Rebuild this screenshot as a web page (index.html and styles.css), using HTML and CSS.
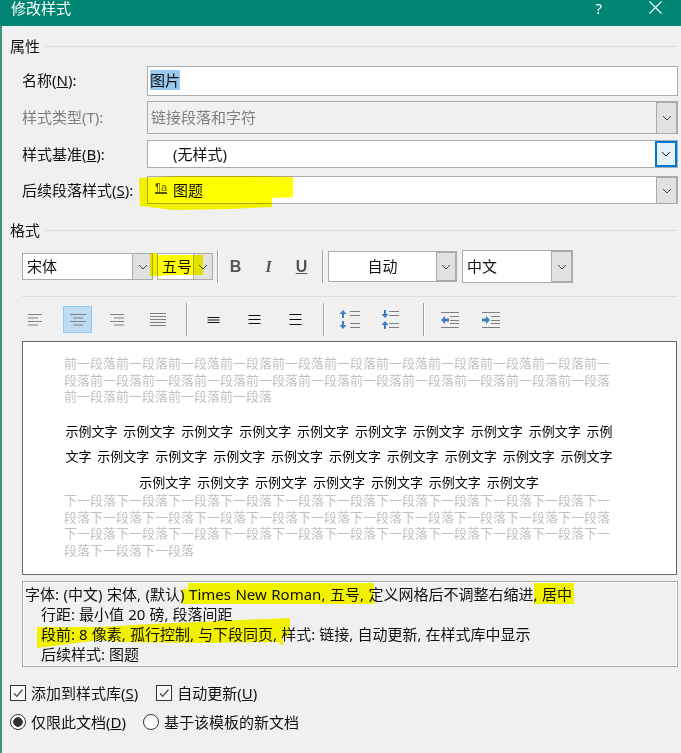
FILE: index.html
```html
<!DOCTYPE html>
<html lang="zh-CN">
<head>
	<meta charset="UTF-8">
	<title>修改样式</title>
	<link rel="stylesheet" href="styles.css">
</head>
<body>
	<svg class="defs" width="0" height="0">
		<symbol id="chev" viewBox="0 0 10 6"><path d="M1 1l4 4 4-4" fill="none" stroke="currentColor" stroke-width="1"/></symbol>
	</svg>
	<div class="dialog">
		<div class="title">
			<span class="title-text">修改样式</span>
			<span class="help">?</span>
			<svg class="close" width="13" height="13" viewBox="0 0 13 13"><path d="M.5.5l12 12M12.5.5l-12 12" stroke="#fff" stroke-width="1.1" fill="none"/></svg>
		</div>

		<div class="legend legend-props"><span>属性</span><i></i></div>

		<div class="row row-name">
			<label>名称(<u>N</u>):</label>
			<div class="field"><span class="val val-sel"><b>图片</b></span></div>
		</div>
		<div class="row row-type">
			<label class="off">样式类型(T):</label>
			<div class="field field-off"><span class="val">链接段落和字符</span><span class="drop drop-off"><svg width="10" height="6"><use href="#chev"/></svg></span></div>
		</div>
		<div class="row row-base">
			<label>样式基准(<u>B</u>):</label>
			<div class="field"><span class="val val-in">(无样式)</span><span class="drop drop-on"><svg width="10" height="6"><use href="#chev"/></svg></span></div>
		</div>
		<div class="row row-next">
			<label>后续段落样式(<u>S</u>):</label>
			<div class="field"><span class="val val-icon"><em class="para">¶a</em>图题</span><span class="drop"><svg width="10" height="6"><use href="#chev"/></svg></span></div>
		</div>

		<div class="legend legend-format"><span>格式</span><i></i></div>

		<div class="bar bar-font">
			<div class="sel sel-font"><span>宋体</span><span class="drop"><svg width="10" height="6"><use href="#chev"/></svg></span></div>
			<div class="sel sel-size"><span>五号</span><span class="drop"><svg width="10" height="6"><use href="#chev"/></svg></span></div>
			<i class="sep"></i>
			<span class="fmt fmt-b">B</span>
			<span class="fmt fmt-i">I</span>
			<span class="fmt fmt-u">U</span>
			<i class="sep"></i>
			<div class="sel sel-color"><span>自动</span><span class="drop drop-thick"><svg width="10" height="6"><use href="#chev"/></svg></span></div>
			<div class="sel sel-lang"><span>中文</span><span class="drop drop-thick"><svg width="10" height="6"><use href="#chev"/></svg></span></div>
		</div>

		<div class="divider"></div>

		<div class="bar bar-para">
			<span class="tool"><svg width="16" height="14" viewBox="0 0 16 14"><path d="M1 1.5h14M1 5h10M1 8.5h14M1 12h10" stroke="#808080"/></svg></span>
			<span class="tool tool-on"><svg width="16" height="14" viewBox="0 0 16 14"><path d="M0 1.5h16M3 5h10M0 8.5h16M3 12h10" stroke="#808080"/></svg></span>
			<span class="tool"><svg width="16" height="14" viewBox="0 0 16 14"><path d="M1 1.5h14M5 5h10M1 8.5h14M5 12h10" stroke="#808080"/></svg></span>
			<span class="tool"><svg width="16" height="14" viewBox="0 0 16 14"><path d="M0 .5h16M0 3.5h16M0 6.5h16M0 9.5h16M0 12.5h16" stroke="#808080"/></svg></span>
			<i class="sep sep-a"></i>
			<span class="tool"><svg width="13" height="14" viewBox="0 0 13 14"><path d="M.5 4.5h12M.5 7h12M.5 9.5h12" stroke="#111" fill="none"/></svg></span>
			<span class="tool"><svg width="13" height="14" viewBox="0 0 13 14"><path d="M.5 2.5h12M.5 6.5h12M.5 10.5h12" stroke="#111" fill="none"/></svg></span>
			<span class="tool"><svg width="13" height="14" viewBox="0 0 13 14"><path d="M.5 1.5h12M.5 6.5h12M.5 11.5h12" stroke="#111" fill="none"/></svg></span>
			<i class="sep sep-b"></i>
			<span class="tool"><svg width="22" height="19" viewBox="0 0 22 19"><path d="M4 0L.5 4H3v4h2V4h2.5zM3 11v4H.5L4 19l3.500-4H5v-4z" fill="#3f7fc0"/><path d="M11 1.500h10M11 5.500h10M11 13.500h10M11 17.500h10" stroke="#808080"/></svg></span>
			<span class="tool"><svg width="19" height="19" viewBox="0 0 19 19"><path d="M3 0v4H.5L4 8l3.500-4H5V0zM4 11L.5 15H3v4h2v-4h2.500z" fill="#3f7fc0"/><path d="M8 1.500h10M8 5.500h10M8 13.500h10M8 17.500h10" stroke="#808080"/></svg></span>
			<i class="sep sep-c"></i>
			<span class="tool"><svg width="18" height="16" viewBox="0 0 18 16"><path d="M0 .5h18M9 4.500h9M9 8.500h9M9 11.500h9M0 15.500h18" stroke="#808080"/><path d="M0 8l4-4v2.500h4v3H4V12z" fill="#3f7fc0"/></svg></span>
			<span class="tool"><svg width="18" height="16" viewBox="0 0 18 16"><path d="M0 .5h18M9 4.500h9M9 8.500h9M9 11.500h9M0 15.500h18" stroke="#808080"/><path d="M8 8L4 4v2.500H0v3h4V12z" fill="#3f7fc0"/></svg></span>
		</div>

		<div class="preview">
			<p class="ghost">前一段落前一段落前一段落前一段落前一段落前一段落前一段落前一段落前一段落前一段落前一段落前一段落前一段落前一段落前一段落前一段落前一段落前一段落前一段落前一段落前一段落前一段落前一段落前一段落前一段落</p>
			<p class="sample">示例文字 示例文字 示例文字 示例文字 示例文字 示例文字 示例文字 示例文字 示例文字 示例文字 示例文字 示例文字 示例文字 示例文字 示例文字 示例文字 示例文字 示例文字 示例文字 示例文字 示例文字 示例文字 示例文字 示例文字 示例文字 示例文字</p>
			<p class="ghost">下一段落下一段落下一段落下一段落下一段落下一段落下一段落下一段落下一段落下一段落下一段落下一段落下一段落下一段落下一段落下一段落下一段落下一段落下一段落下一段落下一段落下一段落下一段落下一段落下一段落下一段落下一段落下一段落下一段落下一段落下一段落下一段落下一段落下一段落</p>
		</div>

		<div class="summary">
			<p>字体: (中文) 宋体, (默认) Times New Roman, 五号, 定义网格后不调整右缩进, 居中</p>
			<p class="ind">行距: 最小值 20 磅, 段落间距</p>
			<p class="ind">段前: 8 像素, 孤行控制, 与下段同页, 样式: 链接, 自动更新, 在样式库中显示</p>
			<p class="ind">后续样式: 图题</p>
		</div>

		<div class="opts opts-check">
			<label class="opt opt-gallery"><span class="box"><svg width="14" height="14" viewBox="0 0 14 14"><path d="M3 7.500l2.800 2.800L11.500 3.500" fill="none" stroke="#444" stroke-width="1.200"/></svg></span>添加到样式库(<u>S</u>)</label>
			<label class="opt"><span class="box"><svg width="14" height="14" viewBox="0 0 14 14"><path d="M3 7.500l2.800 2.800L11.500 3.500" fill="none" stroke="#444" stroke-width="1.200"/></svg></span>自动更新(<u>U</u>)</label>
		</div>
		<div class="opts opts-radio">
			<label class="opt opt-only"><span class="radio radio-on"></span>仅限此文档(<u>D</u>)</label>
			<label class="opt"><span class="radio"></span>基于该模板的新文档</label>
		</div>
	</div>

	<!-- 荧光笔痕迹,盖在对话框上面 -->
	<svg class="marker" width="681" height="753" viewBox="0 0 681 753">
		<path d="M139 178L180 176 250 176 293 177 293 197 272 198 272 207 230 209 173 210 140 206z"/>
		<path d="M150 253L157 253 157 255 203 255 203 275 163 275 163 276 150 276z"/>
		<path d="M182 589L188 589 188 583 374 583 374 604 182 604z"/>
		<path d="M534 583L574 583 574 604 534 604z"/>
		<path d="M37 627L100 627 150 624 200 622 240 620 290 618 290 636 283 637 283 646 278 642 200 643 120 642 100 640 37 648z"/>
	</svg>
</body>
</html>
```
FILE: styles.css
```css
*{
	margin: 0;
	padding: 0;
	box-sizing: border-box;
}
body{
	background: #f0f0f0;
	font: 15px/20px "Noto Sans","Noto Sans CJK SC",sans-serif;
	color: #111;
	overflow: hidden;
	position: relative;
	height: 753px;
}
.defs{
	position: absolute;
}
.dialog{
	height: 753px;
	box-shadow: inset 2px 0 0 #3f9385;
}
.title{
	height: 26px;
	background: #008672;
	color: #fff;
	display: flex;
	align-items: flex-start;
	padding: 0 19px 0 11px;
	line-height: 16px;
}
.title-text{
	flex: 1;
}
.help{
	margin-right: 47px;
}
.close{
	margin-top: 1px;
}
.legend{
	display: flex;
	align-items: center;
	gap: 5px;
	height: 18px;
	padding: 0 4px 0 10px;
}
.legend span{
	padding-bottom: 2px;
}
.legend i{
	flex: 1;
	height: 1px;
	background: #ddd;
	margin-top: -2px;
}
.legend-props{
	margin-top: 12px;
	margin-bottom: 10px;
}
.legend-format{
	margin-top: 18px;
	margin-bottom: 10px;
}
.row{
	display: grid;
	grid-template-columns: 125px 531px;
	padding-left: 22px;
	align-items: center;
}
.row label{
	padding-bottom: 2px;
	word-spacing: 1px;
}
.row label.off{
	color: #808080;
}
.row-name{
	height: 30px;
}
.row-type{
	height: 33px;
	margin-top: 5px;
}
.row-base{
	height: 28px;
	margin-top: 6px;
}
.row-next{
	height: 28px;
	margin-top: 8px;
}
.field{
	height: 100%;
	display: flex;
	align-items: stretch;
	background: #fff;
	border: 1px solid #ababab;
}
.field-off{
	background: #f0f0f0;
	color: #808080;
}
.val{
	flex: 1;
	display: flex;
	align-items: center;
	padding: 0 0 2px 3px;
}
.row-base label,.row-next label,.row-base .val,.row-next .val{
	padding-bottom: 0;
}
.val-sel b{
	font-weight: normal;
	background: #99c9ef;
	line-height: 20px;
}
.val-sel{
	padding-left: 2px;
}
.val-in{
	padding-left: 25px;
}
.val-icon{
	padding-left: 7px;
}
.para{
	font: 11px/11px "Liberation Sans",sans-serif;
	width: 18px;
	margin-top: -5px;
	color: #555;
	text-decoration: underline 2px;
	text-underline-offset: 1px;
}
.drop{
	width: 22px;
	display: flex;
	align-items: center;
	justify-content: center;
	background: #e1e1e1;
	border-left: 1px solid #ababab;
	color: #444;
	flex: none;
}
.row .drop{
	border-right: 2px solid #ababab;
	border-top: 1px solid #ababab;
	margin-right: -1px;
}
.row .drop-on{
	background: #e5f1fb;
	border: 2px solid #0078d7;
	color: #111;
	margin: 0;
}
.bar{
	display: flex;
	align-items: center;
	height: 33px;
}
.bar-font{
	padding-left: 22px;
}
.sel{
	display: flex;
	align-items: stretch;
	background: #fff;
	border: 1px solid #ababab;
}
.sel > span:first-child{
	flex: 1;
	display: flex;
	align-items: center;
	padding: 0 0 2px 4px;
}
.sel-font{
	width: 131px;
	height: 27px;
}
.sel-font .drop{
	width: 20px;
}
.sel-size{
	width: 56px;
	height: 27px;
	margin-left: 4px;
}
.sel-size .drop{
	width: 19px;
}
.sel-color{
	width: 129px;
	height: 31px;
}
.sel-color > span:first-child{
	justify-content: center;
	padding-left: 0;
}
.sel-lang{
	width: 111px;
	height: 33px;
	margin-left: 5px;
}
.drop-thick{
	border-right: 2px solid #ababab;
	border-top: 2px solid #ababab;
	border-bottom: 2px solid #ababab;
	border-left: 1px solid #ababab;
	margin: -1px -1px -1px 0;
	width: 21px;
}
.sel-lang .drop-thick{
	width: 22px;
}
.sep{
	width: 2px;
	height: 33px;
	background: linear-gradient(to right,#a0a0a0 1px,#fff 1px);
	flex: none;
}
.bar-font .sep:nth-of-type(1){
	margin-left: 4px;
}
.fmt{
	width: 33px;
	text-align: center;
	color: #555;
	font: bold 16px/20px "Liberation Sans",sans-serif;
}
.fmt-i{
	font-style: italic;
	font-family: "Liberation Serif",serif;
}
.fmt-u{
	text-decoration: underline;
}
.fmt-u + .sep{
	margin: 0 4px;
}
.divider{
	height: 1px;
	background: #ddd;
	margin: 13px 4px 0 22px;
}
.bar-para{
	margin-top: 6px;
	padding-left: 14px;
}
.tool{
	width: 41px;
	height: 27px;
	display: flex;
	align-items: center;
	justify-content: center;
	flex: none;
}
.tool-on{
	background: #c0dcf3;
	box-shadow: inset 0 0 0 1px #90c8f6;
	width: 29px;
	margin: 0 4px 0 8px;
}
.sep-a{
	margin: 0 5px 0 8px;
}
.sep-b{
	margin: 0 4px 0 7px;
}
.sep-c{
	margin: 0 4px 0 12px;
}
.preview{
	height: 234px;
	margin: 5px 4px 0 22px;
	background: #fff;
	border: 1px solid #696969;
	padding: 13px 0 0 40px;
	font-size: 13px;
	font-family: "Noto Sans CJK SC",sans-serif;
}
.ghost{
	width: 552px;
	margin-left: 1px;
	line-height: 16.5px;
	color: #c0c0c0;
}
.sample{
	width: 552px;
	line-height: 25.5px;
	margin: 13px 0 -2px;
	text-align: center;
	color: #000;
	word-spacing: 3px;
	line-break: anywhere;
}
.summary{
	height: 86px;
	margin: 6px 3px 0 22px;
	border: 1px solid #aaa;
	box-shadow: inset 0 0 0 1px #fff;
	padding: 2px 2px;
	word-spacing: 0.6px;
}
.summary .ind{
	padding-left: 16px;
	word-spacing: 0.2px;
}
.opts{
	display: flex;
	padding-left: 10px;
	height: 20px;
}
.opts-check{
	margin-top: 16px;
}
.opts-radio{
	margin-top: 9px;
}
.opt{
	display: flex;
	align-items: center;
}
.opt-gallery{
	margin-right: 18px;
}
.opt-only{
	margin-right: 17px;
}
.box{
	width: 16px;
	height: 16px;
	border: 1px solid #333;
	background: #f8f8f8;
	margin-right: 5px;
}
.box svg{
	display: block;
}
.radio{
	width: 16px;
	height: 16px;
	border: 1px solid #333;
	border-radius: 50%;
	background: #fff;
	margin-right: 5px;
}
.radio-on{
	background: radial-gradient(circle,#333 4.5px,#fff 5px);
}
.marker{
	position: absolute;
	left: 0;
	top: 0;
	pointer-events: none;
	mix-blend-mode: multiply;
}
.marker path{
	fill: #ffff00;
}
```
